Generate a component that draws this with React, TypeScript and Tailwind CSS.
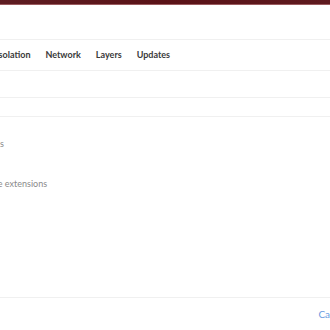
import React from 'react'

const tabs = ['Isolation', 'Network', 'Layers', 'Updates']

export default function App() {
  return (
    <div className="w-[330px] h-[330px] overflow-hidden bg-white flex flex-col" style={{ fontFamily: 'Lato, "Open Sans", sans-serif' }}>
      {/* title bar */}
      <div className="h-[5px] bg-gradient-to-r from-[#5e1d22] via-[#5a1217] to-[#5e1a1f] border-b border-[#9a5a5e]" />
      <div className="h-[34px]" />

      {/* tabs */}
      <div className="border-t border-[#f0f0f0] border-b h-[32px] flex items-center">
        <div className="flex items-center gap-[15px] ml-[-4px] text-[9px] font-bold text-[#3a3a3a]">
          {tabs.map(t => (
            <span key={t}>{t}</span>
          ))}
        </div>
      </div>

      <div className="h-[27px] border-b border-[#f0f0f0]" />
      <div className="h-[19px] border-b border-[#f0f0f0]" />

      <div className="flex-1 flex flex-col text-[9px] text-[#8a8a8a]">
        <div className="mt-[20px] ml-[-63px] whitespace-nowrap">Allow extensions</div>
        <div className="mt-[26px] ml-[-29px] whitespace-nowrap">Manage extensions</div>
      </div>

      <div className="h-[33px] border-t border-[#f0f0f0] flex items-center justify-end">
        <span className="text-[10px] text-[#6a9be0] mr-[-18px]">Cancel</span>
      </div>
    </div>
  )
}
